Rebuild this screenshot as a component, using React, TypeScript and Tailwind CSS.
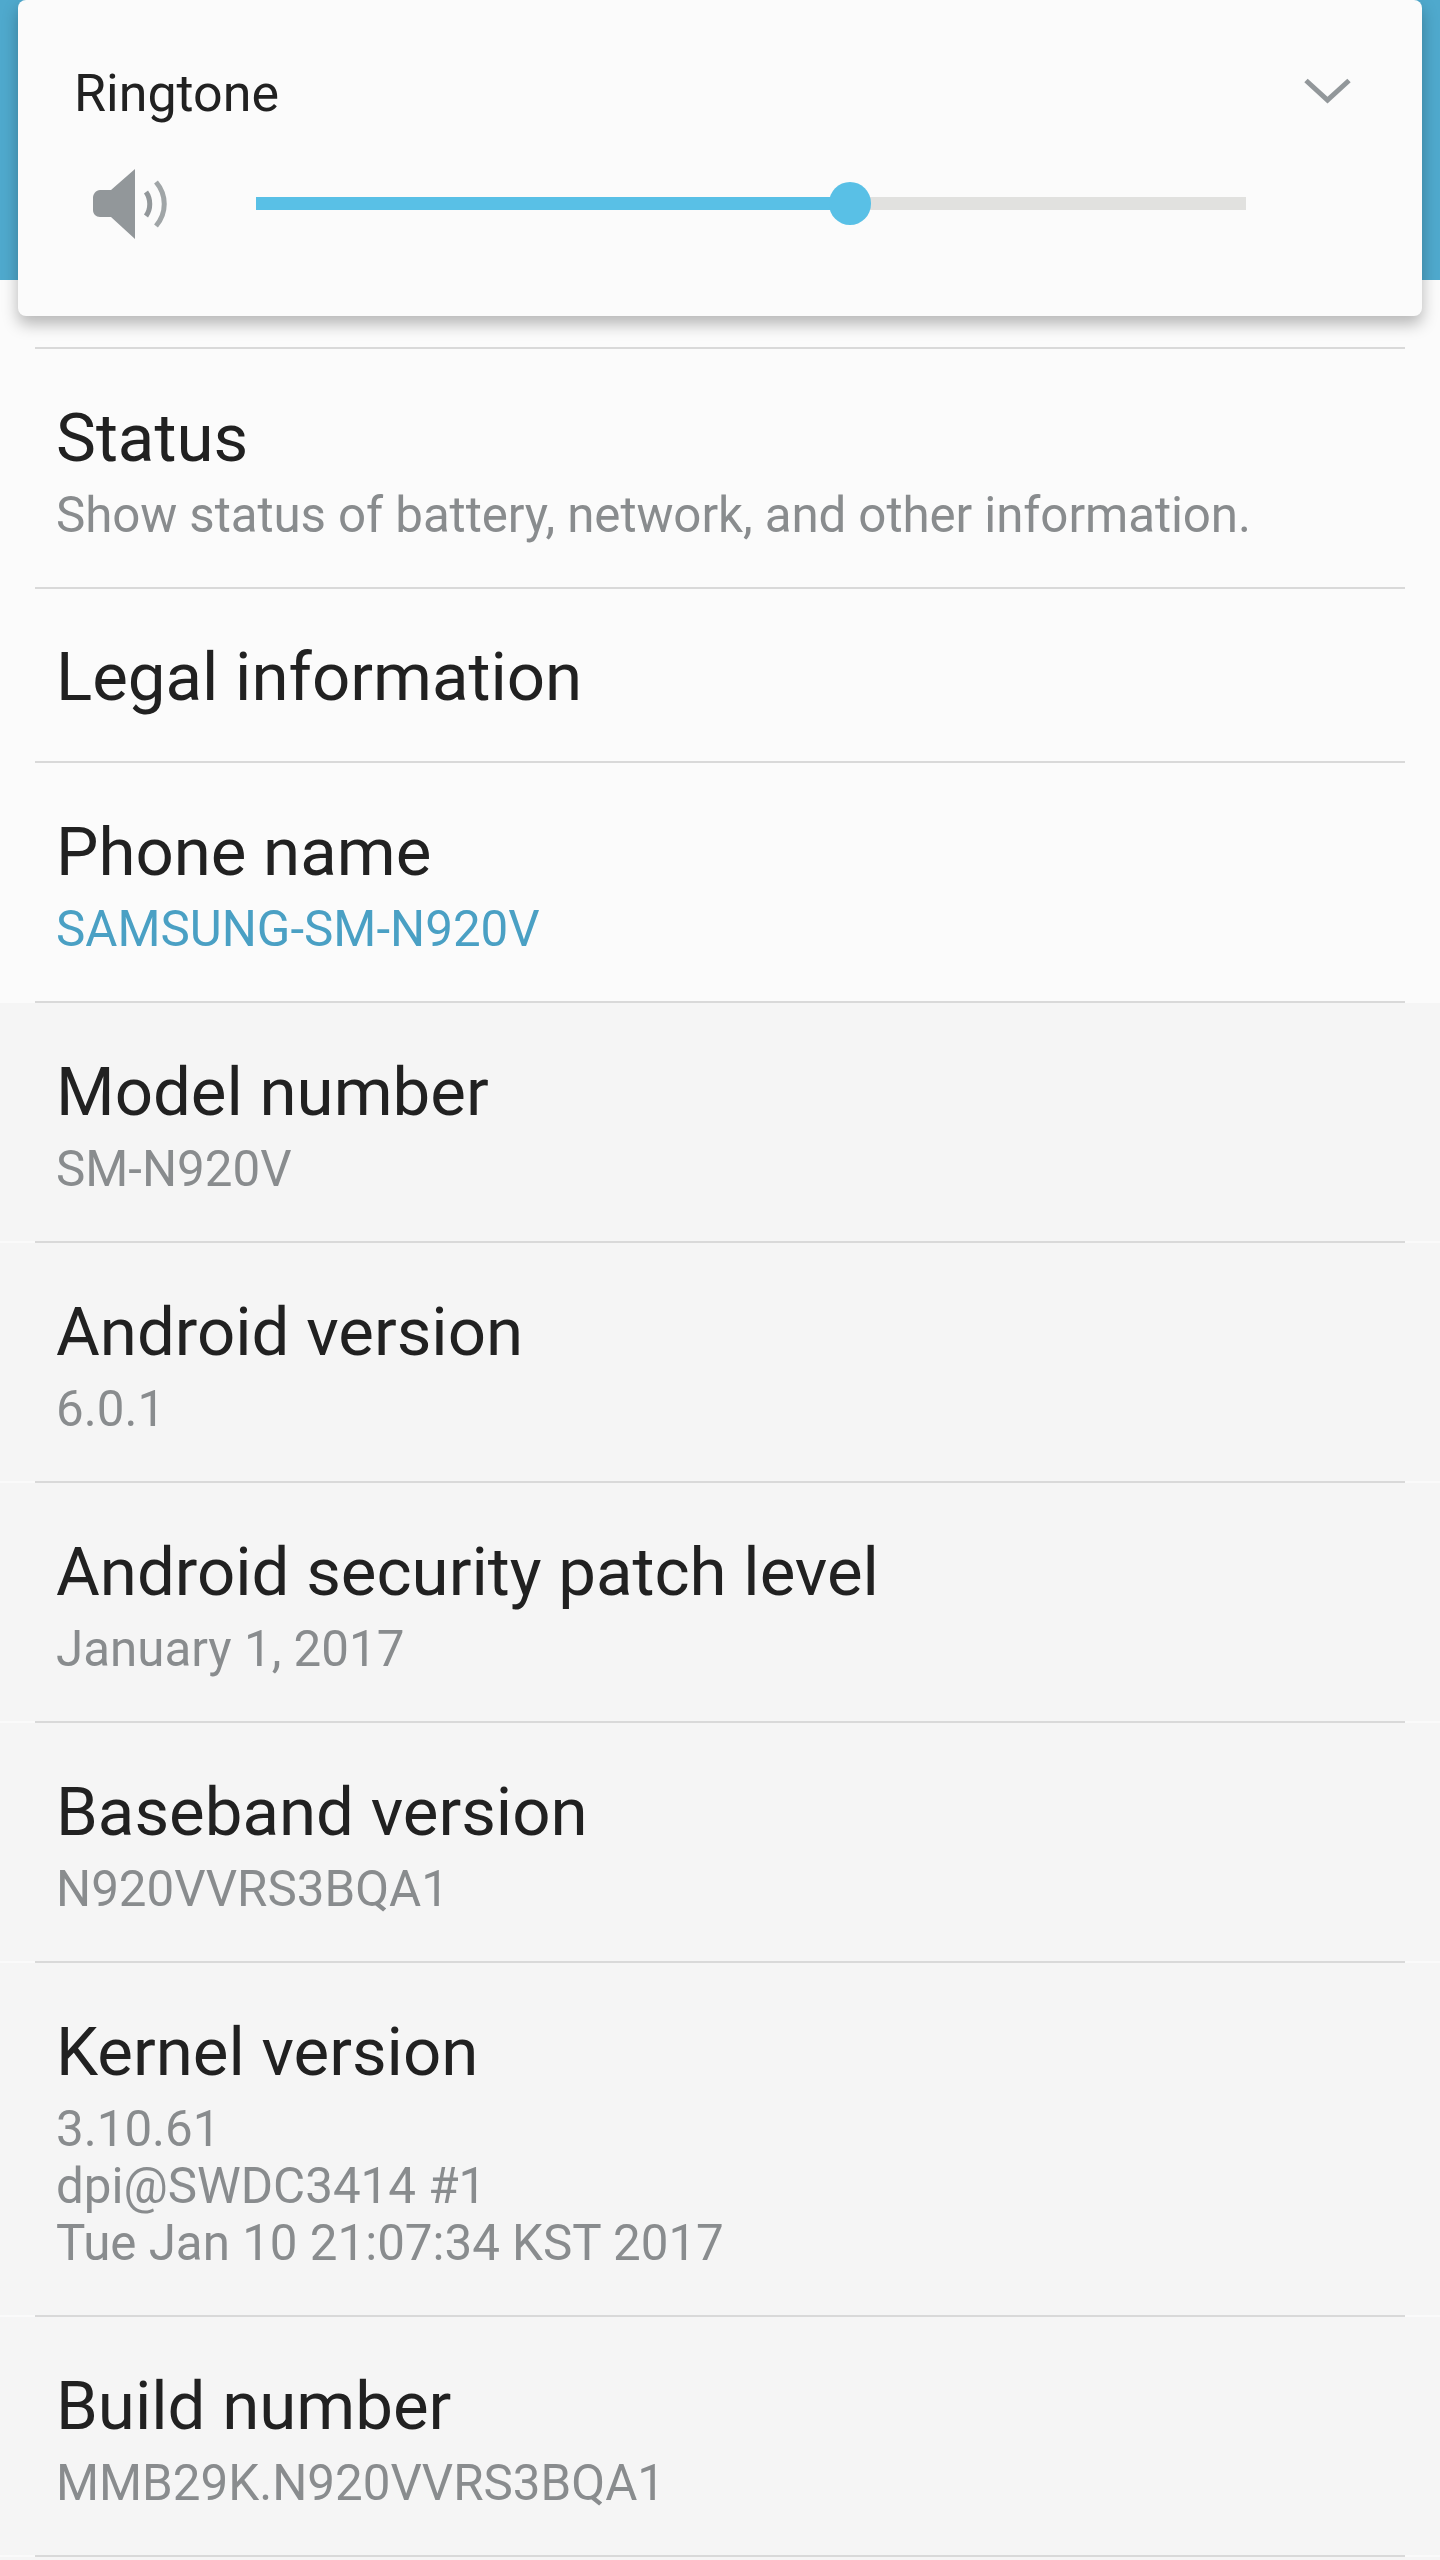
import React from 'react';

type Item = { title: string; lines?: string[]; accent?: boolean; tight?: boolean; bg: string };

const items: Item[] = [
  { title: 'Status', lines: ['Show status of battery, network, and other information.'], tight: true, bg: 'bg-[#fbfbfb]' },
  { title: 'Legal information', bg: 'bg-[#fbfbfb]' },
  { title: 'Phone name', lines: ['SAMSUNG-SM-N920V'], accent: true, bg: 'bg-[#fbfbfb]' },
  { title: 'Model number', lines: ['SM-N920V'], bg: 'bg-[#f5f5f5]' },
  { title: 'Android version', lines: ['6.0.1'], bg: 'bg-[#f5f5f5]' },
  { title: 'Android security patch level', lines: ['January 1, 2017'], bg: 'bg-[#f5f5f5]' },
  { title: 'Baseband version', lines: ['N920VVRS3BQA1'], bg: 'bg-[#f5f5f5]' },
  { title: 'Kernel version', lines: ['3.10.61', 'dpi@SWDC3414 #1', 'Tue Jan 10 21:07:34 KST 2017'], bg: 'bg-[#f5f5f5]' },
  { title: 'Build number', lines: ['MMB29K.N920VVRS3BQA1'], bg: 'bg-[#f5f5f5]' },
];

const Divider = ({ bg }: { bg: string }) => (
  <div className={`h-[2px] ${bg}`}>
    <div className="mx-[35px] h-full bg-[#d9d9d9]" />
  </div>
);

const Row = ({ item }: { item: Item }) => (
  <div className={item.bg}>
    <div className={item.lines ? 'pl-[56px] pr-[57px] pt-[49px] pb-[43px]' : 'pl-[56px] pr-[57px] pt-[48px] pb-[44px]'}>
      <div className="text-[67.2px] leading-[80px] text-[#212121]">{item.title}</div>
      {item.lines && (
        <div
          className={`mt-[9px] text-[49.3px] leading-[57px] ${item.accent ? 'text-[#4aa0c4]' : 'text-[#898c8e]'} ${
            item.tight ? 'tracking-[-0.09px]' : ''
          }`}
        >
          {item.lines.map((line) => (
            <div key={line}>{line}</div>
          ))}
        </div>
      )}
    </div>
    <Divider bg={item.bg === 'bg-[#f5f5f5]' ? 'bg-[#fafafa]' : 'bg-[#fbfbfb]'} />
  </div>
);

const VolumePanel = () => (
  <div className="absolute left-[18px] right-[18px] top-0 h-[316px] rounded-[8px] bg-[#fbfbfb] shadow-[0_8px_16px_rgba(0,0,0,0.28)]">
    <div className="flex items-start justify-between pl-[56px] pr-[71px] pt-[63px]">
      <span className="text-[52px] leading-[62px] text-[#212121]">Ringtone</span>
      <svg width="47" height="26" viewBox="0 0 47 26" className="mt-[15px]">
        <path d="M2 2.5 23.5 22 45 2.5" fill="none" stroke="#92979a" strokeWidth="5" />
      </svg>
    </div>
    <div className="mt-[43px] flex items-center pl-[75px]">
      <svg width="74" height="70" viewBox="0 0 74 70" className="mt-[1px] shrink-0">
        <path d="M42 0V70L18 48H7C3 48 0 45 0 41V29C0 25 3 21 7 21H18Z" fill="#92979a" />
        <path d="M53 23C58 30 58 40 53 47" fill="none" stroke="#92979a" strokeWidth="5" />
        <path d="M63 13C74 26 74 44 63 57" fill="none" stroke="#a0a5a7" strokeWidth="5" />
      </svg>
      <div className="relative ml-[89px] flex h-[13px] w-[990px]">
        <div className="h-full w-[594px] bg-[#59c0e6]" />
        <div className="h-full flex-1 bg-[#e1e1df]" />
        <div className="absolute left-[573px] top-[-15px] h-[43px] w-[42px] rounded-full bg-[#59c0e6]" />
      </div>
    </div>
  </div>
);

export default function App() {
  return (
    <div className="relative h-[2560px] w-[1440px] overflow-hidden bg-[#f5f5f5] font-['Roboto',sans-serif]">
      <div className="h-[280px] bg-[#4fa9cd] shadow-[0_2px_6px_rgba(0,0,0,0.2)]" />
      <div className="h-[67px] bg-[#fbfbfb]" />
      <Divider bg="bg-[#fbfbfb]" />
      {items.map((item) => (
        <Row key={item.title} item={item} />
      ))}
      <VolumePanel />
    </div>
  );
}
